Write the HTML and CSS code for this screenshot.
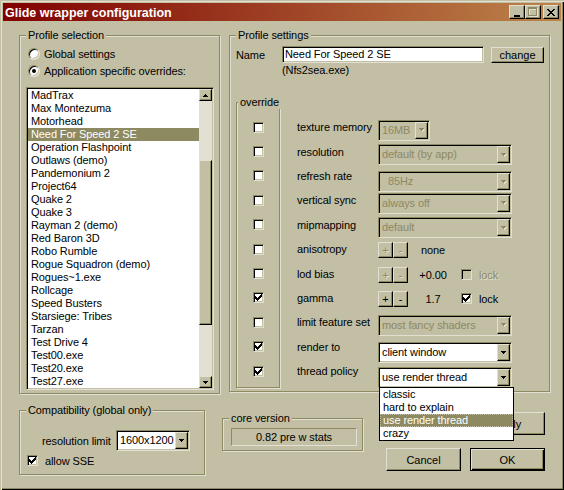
FILE: index.html
```html
<!DOCTYPE html>
<html lang="en">
<head>
    <meta charset="UTF-8">
    <title>Glide wrapper configuration</title>
    <link rel="stylesheet" href="styles.css">
</head>
<body>
    <div class="window">
        <div class="titlebar">
            <span class="title">Glide wrapper configuration</span>
            <div class="caption-btns">
                <span class="cap-btn raised">
                    <svg width="8" height="9" viewBox="0 0 8 9"><rect x="1" y="7" width="6" height="2"/></svg>
                </span>
                <span class="cap-btn raised">
                    <svg width="10" height="10" viewBox="0 0 10 10" shape-rendering="crispEdges">
                        <path fill="#e1e0d2" d="M1 1h9v9h-9z M2 3v6h7v-6z"/>
                        <path fill="#8d8961" d="M0 0h9v9h-9z M1 2v6h7v-6z" fill-rule="evenodd"/>
                    </svg>
                </span>
                <span class="cap-btn raised close">
                    <svg width="8" height="7" viewBox="0 0 8 7" shape-rendering="crispEdges"><path d="M0 0h2v1h-2z M6 0h2v1h-2z M1 1h2v1h-2z M5 1h2v1h-2z M2 2h4v1h-4z M3 3h2v1h-2z M2 4h4v1h-4z M1 5h2v1h-2z M5 5h2v1h-2z M0 6h2v1h-2z M6 6h2v1h-2z"/></svg>
                </span>
            </div>
        </div>

        <div class="client">
            <div class="top-row">
                <fieldset class="group profiles">
                    <legend>Profile selection</legend>
                    <div class="radio-row"><span class="radio"></span>Global settings</div>
                    <div class="radio-row"><span class="radio on"></span>Application specific overrides:</div>
                    <div class="listbox sunken">
                        <ul class="items">
                            <li>MadTrax</li>
                            <li>Max Montezuma</li>
                            <li>Motorhead</li>
                            <li class="sel">Need For Speed 2 SE</li>
                            <li>Operation Flashpoint</li>
                            <li>Outlaws (demo)</li>
                            <li>Pandemonium 2</li>
                            <li>Project64</li>
                            <li>Quake 2</li>
                            <li>Quake 3</li>
                            <li>Rayman 2 (demo)</li>
                            <li>Red Baron 3D</li>
                            <li>Robo Rumble</li>
                            <li>Rogue Squadron (demo)</li>
                            <li>Rogues~1.exe</li>
                            <li>Rollcage</li>
                            <li>Speed Busters</li>
                            <li>Starsiege: Tribes</li>
                            <li>Tarzan</li>
                            <li>Test Drive 4</li>
                            <li>Test00.exe</li>
                            <li>Test20.exe</li>
                            <li>Test27.exe</li>
                        </ul>
                        <div class="scrollbar">
                            <span class="sb-btn raised">
                                <svg width="5" height="3" viewBox="0 0 5 3" shape-rendering="crispEdges"><path d="M2 0h1v1h-1z M1 1h3v1h-3z M0 2h5v1h-5z"/></svg>
                            </span>
                            <span class="sb-gap"></span>
                            <span class="sb-thumb raised"></span>
                            <span class="sb-fill"></span>
                            <span class="sb-btn raised">
                                <svg width="5" height="3" viewBox="0 0 5 3" shape-rendering="crispEdges"><path d="M0 0h5v1h-5z M1 1h3v1h-3z M2 2h1v1h-1z"/></svg>
                            </span>
                        </div>
                    </div>
                </fieldset>

                <fieldset class="group settings">
                    <legend>Profile settings</legend>
                    <div class="name-row">
                        <span class="name-lbl">Name</span>
                        <div class="edit sunken">Need For Speed 2 SE</div>
                        <button class="btn raised change">change</button>
                    </div>
                    <div class="exe">(Nfs2sea.exe)</div>

                    <div class="options">
                        <fieldset class="group override">
                            <legend>override</legend>
                            <div class="checks">
                                <div class="cell"><span class="check sunken"></span></div>
                                <div class="cell"><span class="check sunken"></span></div>
                                <div class="cell"><span class="check sunken"></span></div>
                                <div class="cell"><span class="check sunken"></span></div>
                                <div class="cell"><span class="check sunken"></span></div>
                                <div class="cell"><span class="check sunken"></span></div>
                                <div class="cell"><span class="check sunken"></span></div>
                                <div class="cell"><span class="check sunken"><svg class="tick" width="7" height="7" viewBox="0 0 7 7" shape-rendering="crispEdges"><path d="M6 0h1v1h-1z M5 1h2v1h-2z M0 2h1v1h-1z M4 2h3v1h-3z M0 3h2v1h-2z M3 3h3v1h-3z M0 4h5v1h-5z M1 5h3v1h-3z M2 6h1v1h-1z"/></svg></span></div>
                                <div class="cell"><span class="check sunken"></span></div>
                                <div class="cell"><span class="check sunken"><svg class="tick" width="7" height="7" viewBox="0 0 7 7" shape-rendering="crispEdges"><path d="M6 0h1v1h-1z M5 1h2v1h-2z M0 2h1v1h-1z M4 2h3v1h-3z M0 3h2v1h-2z M3 3h3v1h-3z M0 4h5v1h-5z M1 5h3v1h-3z M2 6h1v1h-1z"/></svg></span></div>
                                <div class="cell"><span class="check sunken"><svg class="tick" width="7" height="7" viewBox="0 0 7 7" shape-rendering="crispEdges"><path d="M6 0h1v1h-1z M5 1h2v1h-2z M0 2h1v1h-1z M4 2h3v1h-3z M0 3h2v1h-2z M3 3h3v1h-3z M0 4h5v1h-5z M1 5h3v1h-3z M2 6h1v1h-1z"/></svg></span></div>
                            </div>
                        </fieldset>

                        <div class="opt-grid">
                            <span>texture memory</span>
                            <div class="combo sunken off narrow ctl"><span class="val">16MB</span><span class="drop raised"><svg width="6" height="4" viewBox="0 0 6 4" shape-rendering="crispEdges"><path fill="#e1e0d2" d="M1 1h5v1h-5z M2 2h3v1h-3z M3 3h1v1h-1z"/><path fill="#8d8961" d="M0 0h5v1h-5z M1 1h3v1h-3z M2 2h1v1h-1z"/></svg></span></div>

                            <span>resolution</span>
                            <div class="combo sunken off wide ctl"><span class="val">default (by app)</span><span class="drop raised"><svg width="6" height="4" viewBox="0 0 6 4" shape-rendering="crispEdges"><path fill="#e1e0d2" d="M1 1h5v1h-5z M2 2h3v1h-3z M3 3h1v1h-1z"/><path fill="#8d8961" d="M0 0h5v1h-5z M1 1h3v1h-3z M2 2h1v1h-1z"/></svg></span></div>

                            <span>refresh rate</span>
                            <div class="combo sunken off wide ctl low"><span class="val">  85Hz</span><span class="drop raised"><svg width="6" height="4" viewBox="0 0 6 4" shape-rendering="crispEdges"><path fill="#e1e0d2" d="M1 1h5v1h-5z M2 2h3v1h-3z M3 3h1v1h-1z"/><path fill="#8d8961" d="M0 0h5v1h-5z M1 1h3v1h-3z M2 2h1v1h-1z"/></svg></span></div>

                            <span>vertical sync</span>
                            <div class="combo sunken off wide ctl"><span class="val">always off</span><span class="drop raised"><svg width="6" height="4" viewBox="0 0 6 4" shape-rendering="crispEdges"><path fill="#e1e0d2" d="M1 1h5v1h-5z M2 2h3v1h-3z M3 3h1v1h-1z"/><path fill="#8d8961" d="M0 0h5v1h-5z M1 1h3v1h-3z M2 2h1v1h-1z"/></svg></span></div>

                            <span>mipmapping</span>
                            <div class="combo sunken off wide ctl"><span class="val">default</span><span class="drop raised"><svg width="6" height="4" viewBox="0 0 6 4" shape-rendering="crispEdges"><path fill="#e1e0d2" d="M1 1h5v1h-5z M2 2h3v1h-3z M3 3h1v1h-1z"/><path fill="#8d8961" d="M0 0h5v1h-5z M1 1h3v1h-3z M2 2h1v1h-1z"/></svg></span></div>

                            <span>anisotropy</span>
                            <div class="spin">
                                <span class="pm raised off">+</span><span class="pm raised off">-</span>
                                <span class="num">none</span>
                            </div>

                            <span>lod bias</span>
                            <div class="spin">
                                <span class="pm raised off">+</span><span class="pm raised off">-</span>
                                <span class="num">+0.00</span>
                                <span class="lock off"><span class="check sunken"></span>lock</span>
                            </div>

                            <span>gamma</span>
                            <div class="spin">
                                <span class="pm raised">+</span><span class="pm raised">-</span>
                                <span class="num">1.7</span>
                                <span class="lock"><span class="check sunken"><svg class="tick" width="7" height="7" viewBox="0 0 7 7" shape-rendering="crispEdges"><path d="M6 0h1v1h-1z M5 1h2v1h-2z M0 2h1v1h-1z M4 2h3v1h-3z M0 3h2v1h-2z M3 3h3v1h-3z M0 4h5v1h-5z M1 5h3v1h-3z M2 6h1v1h-1z"/></svg></span>lock</span>
                            </div>

                            <span>limit feature set</span>
                            <div class="combo sunken off wide ctl"><span class="val">most fancy shaders</span><span class="drop raised"><svg width="6" height="4" viewBox="0 0 6 4" shape-rendering="crispEdges"><path fill="#e1e0d2" d="M1 1h5v1h-5z M2 2h3v1h-3z M3 3h1v1h-1z"/><path fill="#8d8961" d="M0 0h5v1h-5z M1 1h3v1h-3z M2 2h1v1h-1z"/></svg></span></div>

                            <span>render to</span>
                            <div class="combo sunken wide ctl low"><span class="val">client window</span><span class="drop raised"><svg width="5" height="3" viewBox="0 0 5 3" shape-rendering="crispEdges"><path d="M0 0h5v1h-5z M1 1h3v1h-3z M2 2h1v1h-1z"/></svg></span></div>

                            <span>thread policy</span>
                            <div class="combo sunken wide ctl low open">
                                <span class="val">use render thread</span><span class="drop raised"><svg width="5" height="3" viewBox="0 0 5 3" shape-rendering="crispEdges"><path d="M0 0h5v1h-5z M1 1h3v1h-3z M2 2h1v1h-1z"/></svg></span>
                                <ul class="dropdown">
                                    <li>classic</li>
                                    <li>hard to explain</li>
                                    <li class="sel">use render thread</li>
                                    <li>crazy</li>
                                </ul>
                            </div>
                        </div>
                    </div>
                </fieldset>
            </div>

            <div class="bottom-row">
                <fieldset class="group compat">
                    <legend>Compatibility (global only)</legend>
                    <div class="res-row">
                        <span class="res-lbl">resolution limit</span>
                        <div class="combo sunken res"><span class="val">1600x1200</span><span class="drop raised"><svg width="5" height="3" viewBox="0 0 5 3" shape-rendering="crispEdges"><path d="M0 0h5v1h-5z M1 1h3v1h-3z M2 2h1v1h-1z"/></svg></span></div>
                    </div>
                    <div class="sse-row"><span class="check sunken"><svg class="tick" width="7" height="7" viewBox="0 0 7 7" shape-rendering="crispEdges"><path d="M6 0h1v1h-1z M5 1h2v1h-2z M0 2h1v1h-1z M4 2h3v1h-3z M0 3h2v1h-2z M3 3h3v1h-3z M0 4h5v1h-5z M1 5h3v1h-3z M2 6h1v1h-1z"/></svg></span>allow SSE</div>
                </fieldset>

                <fieldset class="group core">
                    <legend>core version</legend>
                    <div class="core-field">0.82 pre w stats</div>
                </fieldset>

                <div class="buttons">
                    <button class="btn raised">Apply</button>
                    <div class="btn-pair">
                        <button class="btn raised">Cancel</button>
                        <button class="btn default">OK</button>
                    </div>
                </div>
            </div>
        </div>
    </div>
</body>
</html>
```

FILE: styles.css
```css
* {
    box-sizing: border-box;
}

body {
    margin: 0;
    font-family: "Liberation Sans", Arial, sans-serif;
    font-size: 11px;
    letter-spacing: -0.1px;
    color: #000;
    background-color: #c2bfa5;
}

.window {
    width: 564px;
    height: 490px;
    padding: 3px;
    background-color: #c2bfa5;
    box-shadow: inset 1px 1px 0 #c2bfa5, inset 2px 2px 0 #e1e0d2, inset -1px -1px 0 #000, inset -2px -2px 0 #8d8961;
    overflow: hidden;
}

/* bevels */
.raised {
    background-color: #c2bfa5;
    border: 1px solid;
    border-color: #e1e0d2 #000 #000 #e1e0d2;
    box-shadow: inset -1px -1px 0 #8d8961;
}

.sunken {
    border: 1px solid;
    border-color: #8d8961 #e1e0d2 #e1e0d2 #8d8961;
    box-shadow: inset 1px 1px 0 #000, inset -1px -1px 0 #c2bfa5;
    padding: 1px;
    background-color: #fff;
}

/* title bar */
.titlebar {
    height: 18px;
    display: flex;
    align-items: center;
    padding: 0 2px;
    background: linear-gradient(to right, #800000, #bd844a);
    color: #fff;
}

.title {
    font-weight: bold;
    font-size: 12.5px;
    letter-spacing: 0;
    padding-top: 1px;
}

.caption-btns {
    margin-left: auto;
    display: flex;
}

.cap-btn {
    width: 16px;
    height: 14px;
    display: flex;
    align-items: center;
    justify-content: center;
}

.cap-btn svg {
    fill: #000;
}

.cap-btn.close {
    margin-left: 2px;
}

/* layout */
.client {
    padding: 8px 0 0 16px;
}

.top-row {
    display: flex;
    align-items: flex-start;
    gap: 9px;
}

.group {
    margin: 0;
    min-width: 0;
    border: 1px solid #8d8961;
    box-shadow: 1px 1px 0 #e1e0d2, inset 1px 1px 0 #e1e0d2;
}

.group legend {
    padding: 0 2px;
    line-height: 13px;
    background-color: #c2bfa5;
}

/* profile selection */
.profiles {
    width: 201px;
    padding: 3px 5px 3px 6px;
}

.radio-row {
    display: flex;
    align-items: center;
    gap: 4px;
    height: 17px;
    padding-left: 2px;
}

.radio {
    width: 12px;
    height: 12px;
    border-radius: 50%;
    border: 1px solid;
    border-color: #8d8961 #e1e0d2 #e1e0d2 #8d8961;
    box-shadow: inset 1px 1px 0 #000, inset -1px -1px 0 #c2bfa5;
    background-color: #fff;
    display: flex;
    align-items: center;
    justify-content: center;
}

.radio.on::after {
    content: "";
    width: 4px;
    height: 4px;
    border-radius: 50%;
    background-color: #000;
}

.listbox {
    margin-top: 8px;
    width: 188px;
    height: 303px;
    display: flex;
}

.items {
    flex: 1;
    list-style: none;
    margin: 0;
    padding: 0;
}

.items li,
.dropdown li {
    height: 13px;
    line-height: 13px;
    padding-left: 3px;
    white-space: nowrap;
    overflow: hidden;
}

.items li.sel,
.dropdown li.sel {
    background-color: #8d8961;
    color: #fff;
}

.scrollbar {
    width: 13px;
    display: flex;
    flex-direction: column;
    background-color: #e1e0d2;
}

.sb-btn {
    height: 12px;
    display: flex;
    align-items: center;
    justify-content: center;
}

.sb-gap {
    height: 59px;
}

.sb-thumb {
    height: 165px;
}

.sb-fill {
    flex: 1;
}

/* profile settings */
.settings {
    width: 321px;
    padding: 4px 5px 3px 6px;
}

.name-row {
    display: flex;
    align-items: center;
    height: 17px;
}

.name-lbl {
    width: 46px;
}

.edit {
    width: 202px;
    height: 17px;
    line-height: 13px;
    padding: 1px 1px 1px 2px;
}

.btn {
    width: 75px;
    height: 23px;
    padding: 0;
    font: inherit;
    color: #000;
    background-color: #c2bfa5;
}

.btn.change {
    width: 53px;
    height: 16px;
    margin-left: 7px;
    line-height: 12px;
}

.btn.default {
    border: 1px solid #000;
    box-shadow: inset 1px 1px 0 #e1e0d2, inset -1px -1px 0 #000, inset -2px -2px 0 #8d8961;
}

.exe {
    margin: 1px 0 0 46px;
    line-height: 13px;
}

.options {
    display: flex;
    align-items: flex-start;
    margin-top: 19px;
}

.override {
    width: 44px;
    padding: 6px 0 4px 1px;
}

.checks {
    display: flex;
    flex-direction: column;
    align-items: center;
}

.checks .cell {
    height: 24.4px;
    display: flex;
    align-items: center;
}

.check {
    width: 11px;
    height: 11px;
    display: flex;
    flex: none;
}

.opt-grid {
    margin: 19px 0 0 17px;
    display: grid;
    grid-template-columns: 81px auto;
    grid-auto-rows: 24.4px;
    align-items: center;
}

.combo {
    display: flex;
    height: 21px;
    position: relative;
}

.combo .val {
    flex: 1;
    line-height: 17px;
    padding-left: 2px;
    white-space: pre;
    overflow: hidden;
}

.combo .drop {
    width: 13px;
    display: flex;
    align-items: center;
    justify-content: center;
}

.combo.off {
    background-color: #c2bfa5;
    color: #8d8961;
}

.combo.narrow {
    width: 52px;
}

.combo.wide {
    width: 134px;
}

.ctl {
    margin-top: 6px;
}

.ctl.low {
    margin-top: 12px;
}

.spin {
    display: flex;
    align-items: center;
    margin-top: 2px;
}

.pm {
    width: 15px;
    height: 16px;
    display: flex;
    align-items: center;
    justify-content: center;
    line-height: 12px;
}

.pm.off {
    color: #8d8961;
    text-shadow: 1px 1px 0 #e1e0d2;
}

.num {
    width: 50px;
    text-align: center;
}

.lock {
    display: flex;
    align-items: center;
    gap: 7px;
    margin-left: 3px;
}

.lock.off {
    color: #8d8961;
    text-shadow: 1px 1px 0 #e1e0d2;
}

.lock.off .check {
    background-color: #c2bfa5;
}

.dropdown {
    position: absolute;
    top: 100%;
    left: 0;
    width: 135px;
    margin: 0;
    padding: 0;
    list-style: none;
    background-color: #fff;
    border: 1px solid #000;
    color: #000;
    z-index: 5;
}

.dropdown li.sel {
    outline: 1px dotted #c2bfa5;
    outline-offset: -1px;
}

/* bottom row */
.bottom-row {
    display: flex;
    align-items: flex-start;
    margin-top: 10px;
}

.compat {
    width: 186px;
    padding: 13px 5px 7px 6px;
}

.res-row {
    display: flex;
    align-items: center;
    padding-left: 16px;
}

.res-lbl {
    width: 74px;
}

.combo.res {
    width: 74px;
}

.sse-row {
    display: flex;
    align-items: center;
    gap: 7px;
    height: 13px;
    margin: 3px 0 0 1px;
}

.core {
    width: 141px;
    margin: 8px 0 0 17px;
    padding: 3px 4px 4px 6px;
}

.core-field {
    margin-left: 2px;
    width: 126px;
    height: 18px;
    border: 1px solid;
    border-color: #8d8961 #e1e0d2 #e1e0d2 #8d8961;
    text-align: center;
    line-height: 16px;
}

.buttons {
    width: 159px;
    margin: 8px 0 0 23px;
    display: flex;
    flex-direction: column;
    align-items: flex-end;
}

.btn-pair {
    display: flex;
    gap: 9px;
    margin-top: 13px;
}
```
